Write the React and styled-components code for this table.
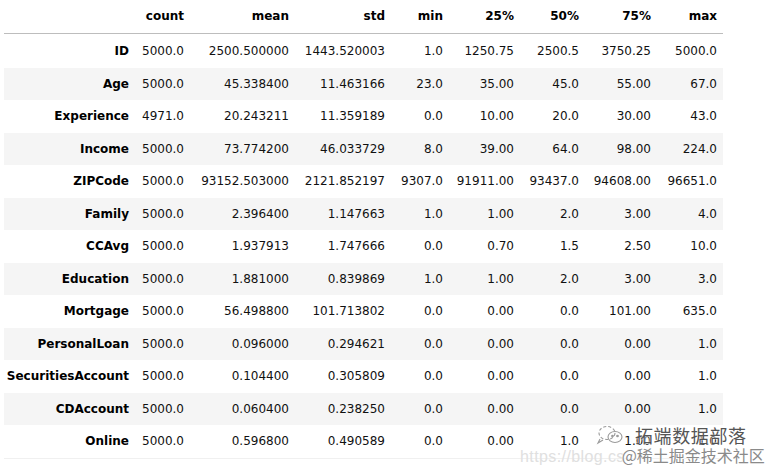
import React from "react";
import styled, { createGlobalStyle } from "styled-components";

const GlobalStyle = createGlobalStyle`
    html, body {
        margin: 0;
        padding: 0;
        background: #ffffff;
    }
    body {
        font-family: "DejaVu Sans", Verdana, sans-serif;
        font-size: 12px;
        color: #000;
    }
`;

const COLS = "131px 55px 105px 96px 58px 71px 65px 72px 66px";

const Page = styled.div`
    position: relative;
    width: 770px;
    height: 472px;
    overflow: hidden;
    padding-left: 4px;
    box-sizing: border-box;
`;

const Table = styled.div`
    display: flex;
    flex-direction: column;
    width: 719px;
`;

const HeaderRow = styled.div`
    display: grid;
    grid-template-columns: ${COLS};
    height: 33px;
    line-height: 33px;
    border-bottom: 1px solid #bdbdbd;
    margin-bottom: 1px;
`;

const Row = styled.div`
    display: grid;
    grid-template-columns: ${COLS};
    height: 32.5px;
    line-height: 32.5px;
    background: ${(p) => (p.$striped ? "#f5f5f5" : "transparent")};
`;

const Cell = styled.div`
    text-align: right;
    padding-right: 6px;
    white-space: nowrap;
    color: ${(p) => (p.$head ? "#000" : "#111")};
    font-weight: ${(p) => (p.$head ? "bold" : "normal")};
`;

const BottomLine = styled.div`
    height: 1px;
    background: #f0f0f0;
`;

const Watermark = styled.div`
    position: absolute;
    left: 520px;
    top: 422px;
    width: 250px;
    height: 50px;
    pointer-events: none;
`;

const MarkTop = styled.div`
    display: flex;
    align-items: center;
    margin-left: 76px;
    height: 26px;
`;

const Brand = styled.span`
    font-family: "Noto Sans CJK SC", sans-serif;
    font-size: 18px;
    color: #555;
    letter-spacing: 0.6px;
    text-shadow: 0 0 2px #fff, 0 0 1px #fff;
    margin-left: 9px;
`;

const MarkBottom = styled.div`
    display: flex;
    align-items: baseline;
    margin-top: -5px;
`;

const Url = styled.span`
    font-family: "Liberation Sans", Arial, sans-serif;
    font-size: 16px;
    letter-spacing: 0.4px;
    color: #e0e0e0;
    white-space: nowrap;
`;

const Community = styled.span`
    font-family: "Noto Sans CJK SC", sans-serif;
    font-size: 16px;
    color: #8a8a8a;
    text-shadow: 0 0 2px #fff, 0 0 2px #fff;
    margin-left: -3px;
`;

const headers = ["", "count", "mean", "std", "min", "25%", "50%", "75%", "max"];

const rows = [
    ["ID", "5000.0", "2500.500000", "1443.520003", "1.0", "1250.75", "2500.5", "3750.25", "5000.0"],
    ["Age", "5000.0", "45.338400", "11.463166", "23.0", "35.00", "45.0", "55.00", "67.0"],
    ["Experience", "4971.0", "20.243211", "11.359189", "0.0", "10.00", "20.0", "30.00", "43.0"],
    ["Income", "5000.0", "73.774200", "46.033729", "8.0", "39.00", "64.0", "98.00", "224.0"],
    ["ZIPCode", "5000.0", "93152.503000", "2121.852197", "9307.0", "91911.00", "93437.0", "94608.00", "96651.0"],
    ["Family", "5000.0", "2.396400", "1.147663", "1.0", "1.00", "2.0", "3.00", "4.0"],
    ["CCAvg", "5000.0", "1.937913", "1.747666", "0.0", "0.70", "1.5", "2.50", "10.0"],
    ["Education", "5000.0", "1.881000", "0.839869", "1.0", "1.00", "2.0", "3.00", "3.0"],
    ["Mortgage", "5000.0", "56.498800", "101.713802", "0.0", "0.00", "0.0", "101.00", "635.0"],
    ["PersonalLoan", "5000.0", "0.096000", "0.294621", "0.0", "0.00", "0.0", "0.00", "1.0"],
    ["SecuritiesAccount", "5000.0", "0.104400", "0.305809", "0.0", "0.00", "0.0", "0.00", "1.0"],
    ["CDAccount", "5000.0", "0.060400", "0.238250", "0.0", "0.00", "0.0", "0.00", "1.0"],
    ["Online", "5000.0", "0.596800", "0.490589", "0.0", "0.00", "1.0", "1.00", "1.0"],
];

function ChatIcon() {
    return (
        <svg width="30" height="22" viewBox="0 0 30 22" fill="none" stroke="#9a9a9a" strokeWidth="1.1">
            <ellipse cx="11" cy="9" rx="8" ry="6.5" strokeDasharray="3 2" />
            <ellipse cx="19" cy="13" rx="7" ry="5.5" />
            <circle cx="16.5" cy="12" r="0.8" fill="#9a9a9a" />
            <circle cx="21.5" cy="12" r="0.8" fill="#9a9a9a" />
            <path d="M4 15 L2 19 L7 16" />
        </svg>
    );
}

export default function App() {
    return (
        <Page>
            <GlobalStyle />
            <Table>
                <HeaderRow>
                    {headers.map((h, i) => (
                        <Cell key={i} $head>
                            {h}
                        </Cell>
                    ))}
                </HeaderRow>
                {rows.map((r, i) => (
                    <Row key={r[0]} $striped={i % 2 === 1}>
                        {r.map((v, j) => (
                            <Cell key={j} $head={j === 0}>
                                {v}
                            </Cell>
                        ))}
                    </Row>
                ))}
                <BottomLine />
            </Table>
            <Watermark>
                <MarkTop>
                    <ChatIcon />
                    <Brand>拓端数据部落</Brand>
                </MarkTop>
                <MarkBottom>
                    <Url>https://blog.cs</Url>
                    <Community>@稀土掘金技术社区</Community>
                </MarkBottom>
            </Watermark>
        </Page>
    );
}
